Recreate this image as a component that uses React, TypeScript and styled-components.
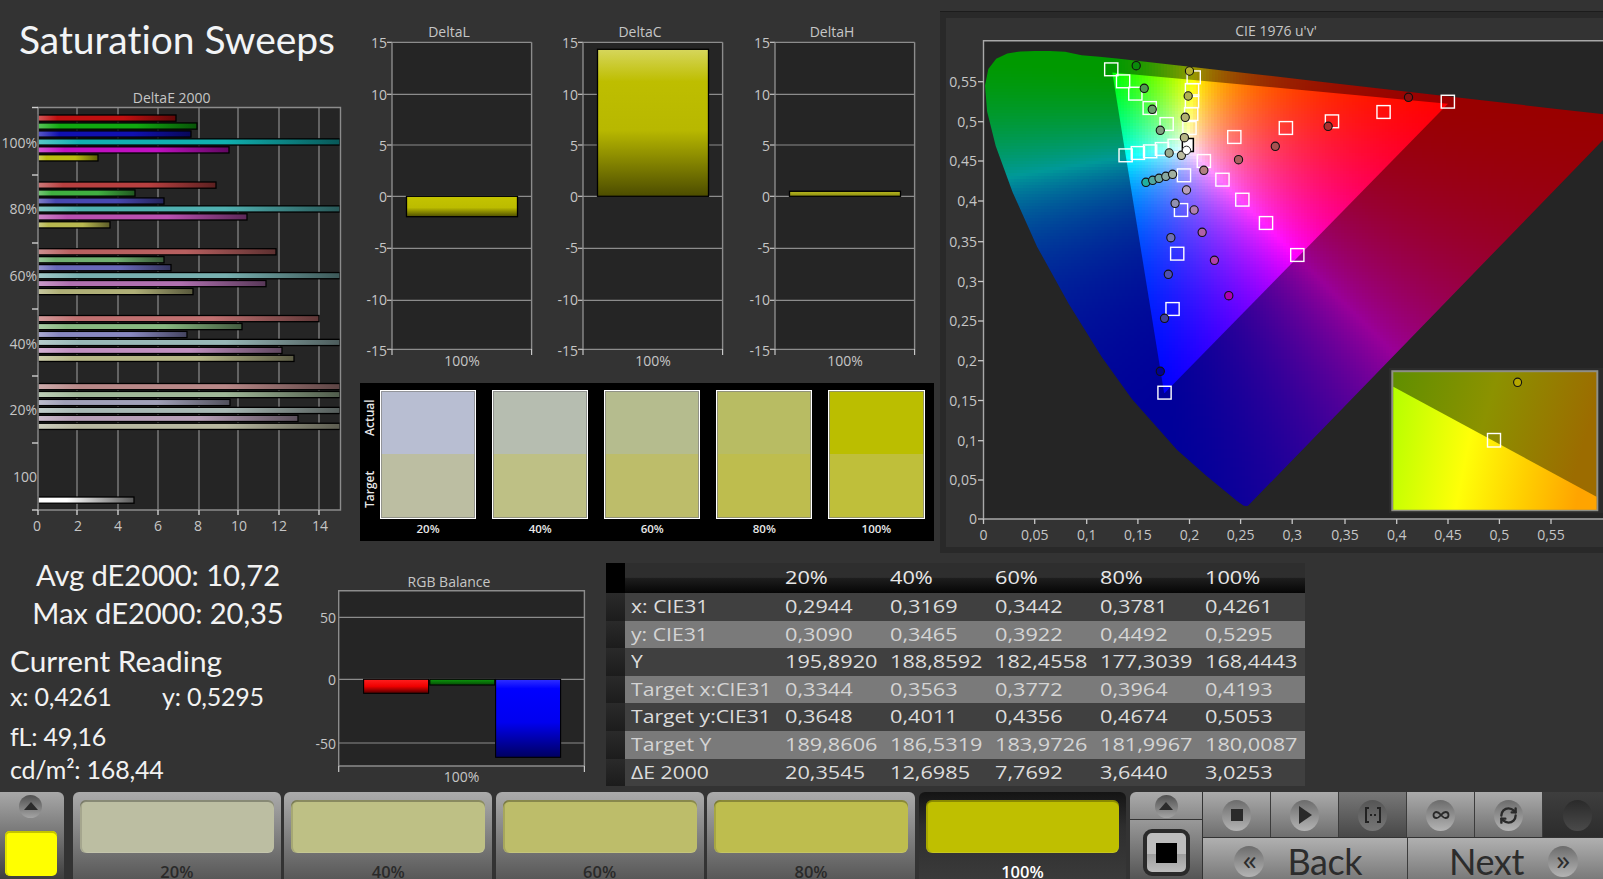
import React, { useMemo } from "react";
import styled, { createGlobalStyle } from "styled-components";
import { Infinity as InfinityIcon, RefreshCw } from "lucide-react";

const Global = createGlobalStyle`
  html, body { margin: 0; padding: 0; background: #333; }
  #root { width: 1603px; height: 879px; }
`;

const Page = styled.div`
  width: 1603px;
  height: 879px;
  background: #333;
  overflow: hidden;
  display: flex;
  flex-direction: column;
  color: #f0f0f0;
  font-family: "Lato", "Open Sans", sans-serif;
`;
const TopArea = styled.div`
  display: flex;
  height: 557px;
`;
const LowerArea = styled.div`
  display: flex;
  height: 235px;
`;
const LeftColumn = styled.section`
  width: 360px;
  display: flex;
  flex-direction: column;
`;
const Title = styled.h1`
  margin: 0;
  height: 85px;
  padding: 17px 0 0 19px;
  box-sizing: border-box;
  font-weight: 400;
  font-size: 39px;
  line-height: 44px;
  letter-spacing: -0.05px;
  color: #f2f4f6;
`;
const MiddleColumn = styled.section`
  width: 580px;
  display: flex;
  flex-direction: column;
`;
const DeltaRow = styled.div`
  display: flex;
  height: 382.5px;
`;
const ChartSvg = styled.svg`
  display: block;
  flex: none;
`;
const ChartTitle = styled.text`
  font-family: "Open Sans", sans-serif;
  font-size: 14px;
  fill: #c6c6c6;
  text-anchor: middle;
`;
const AxisLabel = styled.text`
  font-family: "Open Sans", sans-serif;
  font-size: 14px;
  fill: #c6c6c6;
`;

/* swatch comparison */
const SwatchPanel = styled.div`
  width: 574px;
  height: 158.5px;
  background: #000;
  display: flex;
  box-sizing: border-box;
  padding-top: 7px;
`;
const SideLabels = styled.div`
  width: 20px;
  height: 128px;
  color: #e8e8e8;
  font: 600 12px "Open Sans", sans-serif;
`;
const SideLabel = styled.span<{ $top: number }>`
  display: block;
  height: 36px;
  margin-top: ${(p) => p.$top}px;
  writing-mode: vertical-rl;
  transform: rotate(180deg);
  text-align: center;
  width: 20px;
  line-height: 20px;
`;
const SwatchGrid = styled.div`
  display: grid;
  grid-template-columns: repeat(5, 96.2px);
  column-gap: 15.9px;
`;
const SwatchCard = styled.div`
  display: flex;
  flex-direction: column;
  align-items: center;
  color: #e8e8e8;
  font: 600 11.5px "Open Sans", sans-serif;
`;
const SwatchBox = styled.div`
  width: 96.2px;
  height: 129px;
  box-sizing: border-box;
  border: 1.5px solid #fff;
  outline: 1px solid rgba(130, 130, 130, 0.7);
  outline-offset: -2.5px;
  display: flex;
  flex-direction: column;
  margin-bottom: 2px;
`;
const SwatchHalf = styled.div<{ $c: string }>`
  flex: 1;
  background: ${(p) => p.$c};
`;

/* CIE */
const CieOuter = styled.section`
  width: 663px;
  height: 542px;
  margin-top: 11px;
  box-sizing: border-box;
  background: #292929;
  border-top: 1px solid #1c1c1c;
  padding: 6px 0 6px 6px;
`;

/* stats */
const Stats = styled.section`
  width: 300px;
  flex: none;
  font-size: 29.2px;
  color: #f2f2f2;
`;
const StatCentered = styled.div`
  width: 316px;
  text-align: center;
  line-height: 38px;
  letter-spacing: -0.1px;
  &:first-child { margin-top: -1px; }
`;
const StatHeading = styled.div`
  padding-left: 10px;
  margin-top: 10px;
  line-height: 38px;
  font-size: 29.8px;
`;
const StatLine = styled.div<{ $gap?: number }>`
  padding-left: 10px;
  font-size: 25px;
  line-height: 33px;
  letter-spacing: -0.2px;
  margin-top: ${(p) => p.$gap ?? 0}px;
  display: flex;
`;
const StatX = styled.span`
  width: 152px;
`;

/* table */
const TableWrap = styled.div`
  margin: 5.5px 0 0 0;
`;
const Table = styled.table`
  border-collapse: collapse;
  table-layout: fixed;
  width: 699px;
  font-family: "Open Sans", sans-serif;
`;
const Row = styled.tr<{ $light?: boolean; $h: number }>`
  height: ${(p) => p.$h}px;
  background: ${(p) => (p.$light ? "#7a7a7a" : "#404040")};
  color: ${(p) => (p.$light ? "#d4d4d4" : "#dcdcdc")};
`;
const HeadRow = styled.tr`
  height: 30px;
  background: linear-gradient(#2e2e2e 0 48%, #1e1e1e 50%, #050505 100%);
  color: #e8e8e8;
`;
const Marker = styled.td<{ $head?: boolean }>`
  width: 19px;
  padding: 0;
  background: ${(p) => (p.$head ? "#000" : "linear-gradient(#2a2a2a, #1c1c1c)")};
`;
const LabelCell = styled.td`
  width: 155px;
  padding: 0 0 0 6px;
  box-sizing: border-box;
  white-space: nowrap;
`;
const ValueCell = styled.td`
  width: 105px;
  padding: 0 0 0 5px;
  box-sizing: border-box;
  white-space: nowrap;
`;
const Stretched = styled.span<{ $sx: number }>`
  display: inline-block;
  font-size: 17.5px;
  line-height: 22px;
  transform: scaleX(${(p) => p.$sx});
  transform-origin: left center;
`;

/* bottom bar */
const BottomBar = styled.footer`
  display: flex;
  height: 87px;
  overflow: hidden;
  background: #333;
`;
const PickerTile = styled.div`
  width: 63.5px;
  margin-right: 9.5px;
  flex: none;
  box-sizing: border-box;
  padding-right: 2px;
  border-radius: 0 6px 0 0;
  background: linear-gradient(#a8a8a8, #3f3f3f);
  display: flex;
  flex-direction: column;
  align-items: center;
`;
const UpCircle = styled.div`
  width: 23px;
  height: 23px;
  margin-top: 3px;
  border-radius: 50%;
  background: linear-gradient(#505050, #a4a4a4);
  display: flex;
  align-items: center;
  justify-content: center;
  flex: none;
`;
const UpTriangle = styled.div`
  width: 0;
  height: 0;
  border-left: 7px solid transparent;
  border-right: 7px solid transparent;
  border-bottom: 8px solid #2b2b2b;
  margin-top: -2px;
`;
const PickerSwatch = styled.div`
  width: 52px;
  height: 45px;
  margin-top: 13px;
  border-radius: 5px;
  background: #ffff00;
  box-shadow: inset 0 2px 0 #c4c400, inset 2px 0 0 #e2e200;
`;
const ColorTile = styled.div<{ $selected?: boolean }>`
  width: 207.8px;
  margin-right: 3.6px;
  flex: none;
  box-sizing: border-box;
  border-radius: 6px 6px 0 0;
  background: ${(p) => (p.$selected ? "linear-gradient(#141414 0, #2e2e2e 40%, #3a3a3a)" : "linear-gradient(#ababab, #585858)")};
  padding: 8px ${(p) => (p.$selected ? 7.5 : 7)}px 0;
  color: ${(p) => (p.$selected ? "#fff" : "#2a2a2a")};
  text-align: center;
  font: 600 16.5px/14px "Open Sans", sans-serif;
`;
const TileSwatch = styled.div<{ $c: string }>`
  height: 53px;
  border-radius: 6px;
  background: ${(p) => p.$c};
  box-shadow: inset 0 2px 0 rgba(0, 0, 0, 0.28), inset 2px 0 0 rgba(0, 0, 0, 0.12), inset 0 -1px 0 rgba(255, 255, 255, 0.12);
  margin-bottom: 12px;
`;
const StopColumn = styled.div`
  width: 72.5px;
  margin-right: 1px;
  flex: none;
  display: flex;
  flex-direction: column;
  border-radius: 6px 0 0 0;
  overflow: hidden;
`;
const StopTop = styled.div`
  height: 27px;
  flex: none;
  background: linear-gradient(#ababab, #8a8a8a);
  border-bottom: 1px solid #333;
  display: flex;
  justify-content: center;
`;
const StopBottom = styled.div`
  flex: 1;
  background: linear-gradient(#999, #555);
  display: flex;
  justify-content: center;
  padding-top: 9px;
`;
const StopFrame = styled.div`
  width: 47px;
  height: 47px;
  box-sizing: border-box;
  border: 4px solid #2a2a2a;
  border-radius: 9px;
  background: linear-gradient(#bdbdbd 0 55%, #9d9d9d 55%, #bdbdbd);
  display: flex;
  align-items: center;
  justify-content: center;
`;
const StopSquare = styled.div`
  width: 21px;
  height: 20px;
  background: #000;
`;
const Transport = styled.div`
  flex: 1;
  display: flex;
  flex-direction: column;
`;
const TransportRow = styled.div`
  display: flex;
  height: 44.5px;
  border-bottom: 1px solid #333;
  flex: none;
`;
const TransportButton = styled.div<{ $tone?: "on" | "off" }>`
  width: 68px;
  flex: none;
  box-sizing: border-box;
  padding-top: 2px;
  border-right: 1px solid #3c3c3c;
  display: flex;
  align-items: center;
  justify-content: center;
  background: ${(p) =>
    p.$tone === "on"
      ? "linear-gradient(#787878, #484848)"
      : p.$tone === "off"
      ? "linear-gradient(#3e3e3e, #2c2c2c)"
      : "linear-gradient(#ababab, #6e6e6e)"};
  &:last-child { border-right: 0; flex: 1; }
`;
const RoundKey = styled.div<{ $tone?: "on" | "off" }>`
  width: 29px;
  height: 31px;
  border-radius: 50%;
  display: flex;
  align-items: center;
  justify-content: center;
  background: ${(p) =>
    p.$tone === "on"
      ? "linear-gradient(#555, #777)"
      : p.$tone === "off"
      ? "linear-gradient(#2a2a2a, #4a4a4a)"
      : "linear-gradient(#6c6c6c, #b4b4b4)"};
`;
const NavRow = styled.div`
  display: flex;
  flex: 1;
  min-height: 0;
`;
const NavButton = styled.div<{ $side: "back" | "next" }>`
  width: ${(p) => (p.$side === "back" ? 204.5 : 195)}px;
  flex: none;
  box-sizing: border-box;
  border-right: ${(p) => (p.$side === "back" ? "1px solid #3c3c3c" : "0")};
  background: linear-gradient(#b0b0b0, #7a7a7a);
  display: flex;
  align-items: center;
  padding: 6px 0 0 ${(p) => (p.$side === "back" ? 31 : 41)}px;
  color: #2c2c2c;
  font: 400 36px/35px "Lato", sans-serif;
  letter-spacing: -0.4px;
`;
const NavKey = styled.span`
  width: 30px;
  height: 31px;
  border-radius: 50%;
  flex: none;
  background: linear-gradient(#6c6c6c, #b4b4b4);
  display: flex;
  align-items: center;
  justify-content: center;
  font: 400 28px/28px "Open Sans", sans-serif;
  padding-bottom: 4px;
  box-sizing: border-box;
`;
const NavText = styled.span<{ $gap: number; $after?: boolean }>`
  ${(p) => (p.$after ? `margin-right: ${p.$gap}px;` : `margin-left: ${p.$gap}px;`)}
`;

/* ---------- helpers ---------- */
const hex = (c: string) => [1, 3, 5].map((i) => parseInt(c.slice(i, i + 2), 16));
const mix = (c: string, t: number[], a: number) => {
  const v = hex(c).map((n, i) => Math.round(n + (t[i] - n) * a));
  return `rgb(${v[0]},${v[1]},${v[2]})`;
};

const PlotBg = "#252525";
const Line = "#8c8c8c";

/* ---------- DeltaE horizontal bars ---------- */
const groupData = [
  { y: 115, bars: [["#c01010", 176], ["#10a810", 197], ["#1010b0", 191], ["#10b0b0", 340], ["#c010c0", 229], ["#bcbc10", 98]] },
  { y: 182, bars: [["#b84040", 216], ["#40b040", 135], ["#4848b0", 164], ["#50b0b0", 340], ["#b850b0", 247], ["#b8b850", 110]] },
  { y: 248.7, bars: [["#b86060", 276], ["#70b070", 164], ["#6868b8", 171], ["#78b0b0", 340], ["#b070b0", 266], ["#b0b078", 193]] },
  { y: 315.5, bars: [["#c07070", 319], ["#88b880", 242], ["#8888c0", 187], ["#98b8b8", 340], ["#c090c0", 282], ["#b8b888", 294]] },
  { y: 383.5, bars: [["#b88888", 340], ["#a0b898", 340], ["#a0a0b8", 230], ["#a8b8b4", 340], ["#b8a0b8", 298], ["#b8b8a0", 340]] },
  { y: 497, bars: [["#ffffff", 134]] },
] as { y: number; bars: [string, number][] }[];

const DeltaEChart = () => {
  const x0 = 38;
  const ticks = [77, 118, 158, 199, 238, 279, 319];
  const xLabels = [[0, 37], [2, 78], [4, 118], [6, 158], [8, 198], [10, 239], [12, 279], [14, 320]];
  const cats = [["100%", 148], ["80%", 214], ["60%", 281], ["40%", 349], ["20%", 415], ["100", 482]];
  const catTicks = [107.5, 175, 243, 309, 376, 443, 510];
  return (
    <ChartSvg width={360} height={472} viewBox="0 85 360 472">
      <defs>
        {groupData.flatMap((g) =>
          g.bars.map(([c]) => (
            <linearGradient key={c} id={`h${c.slice(1)}`} x1="0" x2="1" y1="0" y2="0">
              <stop offset="0" stopColor={mix(c, [255, 255, 255], c === "#ffffff" ? 0 : 0.3)} />
              <stop offset="0.14" stopColor={c} />
              <stop offset={c === "#ffffff" ? 0.3 : 0.62} stopColor={c} />
              <stop offset="1" stopColor={mix(c, [0, 0, 0], c === "#ffffff" ? 0.65 : 0.5)} />
            </linearGradient>
          ))
        )}
      </defs>
      <ChartTitle x={171.7} y={103}>DeltaE 2000</ChartTitle>
      <rect x={x0} y={107.5} width={302} height={402.5} fill={PlotBg} />
      {ticks.map((x) => (
        <line key={x} x1={x} x2={x} y1={107.5} y2={510} stroke="#7e7e7e" strokeWidth={1.4} />
      ))}
      {groupData.map((g) =>
        g.bars.map(([c, end], i) => (
          <rect key={g.y + "-" + i} x={x0} y={g.y + i * 7.95} width={end - x0} height={6.2} fill={`url(#h${c.slice(1)})`} stroke="#000" strokeWidth={1.3} />
        ))
      )}
      <path d={`M38 107.5H340.5V510H38Z`} fill="none" stroke={Line} strokeWidth={1.4} />
      {catTicks.map((y) => (
        <line key={y} x1={32} x2={38} y1={y} y2={y} stroke="#cfcfcf" strokeWidth={1.4} />
      ))}
      {ticks.concat([38]).map((x) => (
        <line key={"t" + x} x1={x} x2={x} y1={510} y2={515} stroke="#cfcfcf" strokeWidth={1.4} />
      ))}
      {cats.map(([t, y]) => (
        <AxisLabel key={t} x={37} y={y as number} textAnchor="end">{t}</AxisLabel>
      ))}
      {xLabels.map(([t, x]) => (
        <AxisLabel key={t} x={x} y={531} textAnchor="middle">{t}</AxisLabel>
      ))}
    </ChartSvg>
  );
};

/* ---------- Delta L/C/H ---------- */
const deltaLines = [
  ["15", 42.3, 6], ["10", 94.3, 6], ["5", 145, 6], ["0", 196.3, 6], ["-5", 248.3, 5], ["-10", 300.3, 5], ["-15", 349.3, 7],
] as [string, number, number][];

const DeltaChart = ({ name, top, bottom, grad }: { name: string; top: number; bottom: number; grad: [number, string][] }) => {
  const left = 32;
  const right = 171.6;
  const id = "d" + name;
  return (
    <ChartSvg width={191.4} height={382} viewBox="0 0 191.4 382">
      <defs>
        <linearGradient id={id} x1="0" x2="0" y1="0" y2="1">
          {grad.map(([o, c]) => <stop key={o} offset={o} stopColor={c} />)}
        </linearGradient>
      </defs>
      <ChartTitle x={left + 57} y={37}>{name}</ChartTitle>
      <rect x={left} y={42.3} width={right - left} height={307} fill={PlotBg} />
      {deltaLines.map(([t, y, off]) => (
        <g key={t}>
          <line x1={left} x2={right} y1={y} y2={y} stroke={Line} strokeWidth={1.2} />
          <line x1={left - 5} x2={left} y1={y} y2={y} stroke="#c8c8c8" strokeWidth={1.2} />
          <AxisLabel x={left - 5} y={y + off} textAnchor="end">{t}</AxisLabel>
        </g>
      ))}
      <line x1={left} x2={left} y1={42.3} y2={349.3} stroke={Line} strokeWidth={1.4} />
      <line x1={right} x2={right} y1={42.3} y2={349.3} stroke={Line} strokeWidth={1.4} />
      <line x1={left} x2={left} y1={349} y2={355} stroke="#c8c8c8" strokeWidth={1.2} />
      <line x1={right} x2={right} y1={349} y2={355} stroke="#c8c8c8" strokeWidth={1.2} />
      <rect x={left + 14.5} y={top} width={111} height={bottom - top} fill={`url(#${id})`} stroke="#000" strokeWidth={1.3} />
      <AxisLabel x={left + 70} y={366} textAnchor="middle">100%</AxisLabel>
    </ChartSvg>
  );
};

/* ---------- CIE ---------- */
const locusXY = [
  [0.1741, 0.005], [0.1733, 0.0048], [0.1714, 0.0051], [0.1689, 0.0069], [0.1644, 0.0109], [0.1566, 0.0177],
  [0.144, 0.0297], [0.1241, 0.0578], [0.1096, 0.0868], [0.0913, 0.1327], [0.0687, 0.2007], [0.0454, 0.295],
  [0.0235, 0.4127], [0.0082, 0.5384], [0.0039, 0.6548], [0.0139, 0.7502], [0.0389, 0.812], [0.0743, 0.8338],
  [0.1142, 0.8262], [0.1547, 0.8059], [0.1929, 0.7816], [0.2296, 0.7543], [0.2658, 0.7243], [0.3016, 0.6923],
  [0.3373, 0.6589], [0.3731, 0.6245], [0.4441, 0.5547], [0.5125, 0.4866], [0.5752, 0.4242], [0.627, 0.3725],
  [0.6658, 0.334], [0.6915, 0.3083], [0.7079, 0.292], [0.726, 0.274], [0.7347, 0.2653],
];
const U0 = 983.5;
const V0 = 519;
const SU = 1030;
const SV = 794;
const toPx = (u: number, v: number) => [U0 + u * SU, V0 - v * SV];
const locusPx = locusXY.map(([x, y], i) => {
  const d = -2 * x + 12 * y + 3;
  const [px, py] = toPx((4 * x) / d, (9 * y) / d);
  // the peak of the drawn horseshoe sits a little above the tabulated curve
  const lift = i >= 14 && i <= 21 ? 2.2 : 0;
  return [px, py - lift];
});
const triPx = [toPx(0.451, 0.523), toPx(0.125, 0.5625), toPx(0.1754, 0.1579)];
const pts = (a: number[][]) => a.map((p) => p.map((n) => n.toFixed(1)).join(",")).join(" ");

const inPoly = (px: number, py: number, poly: number[][]) => {
  let inside = false;
  for (let i = 0, j = poly.length - 1; i < poly.length; j = i++) {
    const [xi, yi] = poly[i];
    const [xj, yj] = poly[j];
    if (yi > py !== yj > py && px < ((xj - xi) * (py - yi)) / (yj - yi) + xi) inside = !inside;
  }
  return inside;
};
const colorAt = (px: number, py: number, k: number, e: number) => {
  const u = (px - U0) / SU;
  const v = (V0 - py) / SV;
  const d = 6 * u - 16 * v + 12;
  const x = (9 * u) / d;
  const y = (4 * v) / d;
  const X = x / y;
  const Z = (1 - x - y) / y;
  let r = 3.2406 * X - 1.5372 - 0.4986 * Z;
  let g = -0.9689 * X + 1.8758 + 0.0415 * Z;
  let b = 0.0557 * X - 0.204 + 1.057 * Z;
  r = Math.max(r, 0);
  g = Math.max(g, 0);
  b = Math.max(b, 0);
  const m = Math.max(r, g, b) || 1;
  const f = (n: number) => Math.round(Math.pow(n / m, e) * 255 * k);
  return `rgb(${f(r)},${f(g)},${f(b)})`;
};

const cellsFor = (poly: number[][], k: number, e: number, step: number) => {
  const out: { x: number; y: number; c: string }[] = [];
  const xs = poly.map((p) => p[0]);
  const ys = poly.map((p) => p[1]);
  const x1 = Math.floor(Math.min(...xs));
  const x2 = Math.min(1603, Math.ceil(Math.max(...xs)));
  const y1 = Math.floor(Math.min(...ys));
  const y2 = Math.ceil(Math.max(...ys));
  for (let y = y1; y < y2; y += step) {
    for (let x = x1; x < x2; x += step) {
      const s = step;
      const hit =
        inPoly(x + s / 2, y + s / 2, poly) || inPoly(x, y, poly) || inPoly(x + s, y, poly) || inPoly(x, y + s, poly) || inPoly(x + s, y + s, poly);
      if (hit) out.push({ x, y, c: colorAt(x + s / 2, y + s / 2, k, e) });
    }
  }
  return out;
};

const z5 = (X: number, Y: number) => [940 + X / 2.365, Y / 3];
const z6 = (X: number, Y: number) => [940 + X / 2.365, 280 + Y / 3];

const squares = [
  z5(405, 208), z5(433, 244), z5(462, 281), z5(496, 324), z5(536, 372), z5(555, 437), z5(525, 447), z5(497, 454), z5(468, 459), z5(439, 466),
  z5(600, 232), z5(596, 270), z5(596, 304), z5(594, 342), z5(590, 384),
  z5(1201, 305), z5(1049, 336), z5(927, 364), z5(818, 384), z5(696, 411),
  z5(845, 765), z5(771, 669), z5(715, 599), z5(668, 539), z5(624, 483),
  z6(531, 338), z6(550, 87), z5(561, 761), z5(570, 630), z5(577, 526),
];
const circles: [number[], string][] = [
  [z5(464, 197), "#0a8a0a"], [z5(483, 265), "#4f9a4f"], [z5(502, 328), "#6ca06c"], [z5(521, 391), "#80a080"], [z5(542, 459), "#9aaa90"],
  [z5(590, 213), "#b5b030"], [z5(587, 288), "#b0b050"], [z5(580, 352), "#b0b070"], [z5(578, 413), "#b5b585"], [z5(571, 466), "#bcbca0"],
  [z5(1108, 292), "#8a1010"], [z5(918, 379), "#a83030"], [z5(793, 439), "#a85050"], [z5(706, 479), "#aa6060"], [z5(624, 511), "#b08080"],
  [z5(683, 887), "#b000b0"], [z5(649, 781), "#b040a8"], [z5(620, 697), "#b060a8"], [z5(601, 630), "#b080b0"], [z5(583, 570), "#b8a0b8"],
  [z6(521, 274), "#000090"], [z6(531, 115), "#404098"], [z5(540, 823), "#5050b0"], [z5(546, 713), "#7070b0"], [z5(556, 610), "#9090b0"],
  [z5(487, 547), "#20b0a0"], [z5(503, 541), "#50a8a0"], [z5(518, 535), "#70a8a0"], [z5(534, 529), "#88a8a0"], [z5(550, 523), "#a0b0a0"],
];

const CieChart = () => {
  const outer = useMemo(() => cellsFor(locusPx, 0.6, 1.3, 3), []);
  const inner = useMemo(() => cellsFor(triPx, 1, 1.05, 3), []);
  const uTicks = ["0", "0,05", "0,1", "0,15", "0,2", "0,25", "0,3", "0,35", "0,4", "0,45", "0,5", "0,55"];
  const uX = [983.5, 1034.7, 1086.7, 1137.9, 1189.5, 1240.6, 1292.2, 1345, 1396.7, 1448, 1499.4, 1551];
  const vY = [519, 480, 440.7, 400.5, 360.7, 321, 281.5, 241.7, 201, 161, 121.7, 81.7];
  const [wx, wy] = z5(585, 435);
  const [cx, cy] = z5(583, 451);
  return (
    <ChartSvg width={657} height={529} viewBox="946 18 657 529">
      <defs>
        <clipPath id="locus"><polygon points={pts(locusPx)} /></clipPath>
        <clipPath id="tri"><polygon points={pts(triPx)} /></clipPath>
        <linearGradient id="insetBright" x1="0" x2="1" y1="0" y2="0.12">
          <stop offset="0" stopColor="#b4ff00" />
          <stop offset="0.42" stopColor="#ffff08" />
          <stop offset="0.72" stopColor="#ffd000" />
          <stop offset="1" stopColor="#ffa400" />
        </linearGradient>
        <linearGradient id="insetDark" x1="0" x2="1" y1="0" y2="0.2">
          <stop offset="0" stopColor="#5f8f00" />
          <stop offset="0.5" stopColor="#8c9200" />
          <stop offset="1" stopColor="#9c6c00" />
        </linearGradient>
      </defs>
      <rect x={946} y={18} width={657} height={529} fill="#333" />
      <ChartTitle x={1276} y={36}>CIE 1976 u'v'</ChartTitle>
      <rect x={983.5} y={40.7} width={640} height={478.3} fill={PlotBg} />
      <path d="M1603 40.7H983.5V519H1603" fill="none" stroke="#a8a8a8" strokeWidth={1.4} />
      <g clipPath="url(#locus)" shapeRendering="crispEdges">
        {outer.map((c) => <rect key={c.x + "_" + c.y} x={c.x} y={c.y} width={3.4} height={3.4} fill={c.c} />)}
      </g>
      <g clipPath="url(#tri)" shapeRendering="crispEdges">
        {inner.map((c) => <rect key={c.x + "_" + c.y} x={c.x} y={c.y} width={3.4} height={3.4} fill={c.c} />)}
      </g>
      {uTicks.map((t, i) => (
        <g key={t}>
          <line x1={978} x2={983.5} y1={vY[i]} y2={vY[i]} stroke="#c8c8c8" strokeWidth={1.3} />
          <AxisLabel x={977} y={vY[i] + 5} textAnchor="end">{t}</AxisLabel>
          <line x1={uX[i]} x2={uX[i]} y1={519} y2={524} stroke="#c8c8c8" strokeWidth={1.3} />
          <AxisLabel x={uX[i]} y={540} textAnchor="middle">{t}</AxisLabel>
        </g>
      ))}
      {squares.map(([x, y], i) => (
        <rect key={i} x={x - 6.6} y={y - 6.4} width={13.2} height={12.8} fill="none" stroke="#fff" strokeWidth={1.4} />
      ))}
      <rect x={wx - 5} y={wy - 6.5} width={11} height={13} fill="#fff" stroke="#000" strokeWidth={1.5} />
      {circles.map(([p, c], i) => (
        <ellipse key={i} cx={p[0]} cy={p[1]} rx={4.1} ry={4.2} fill={c} stroke="#111" strokeWidth={1.1} />
      ))}
      <ellipse cx={cx} cy={cy} rx={4.1} ry={4.2} fill="#fff" stroke="#222" strokeWidth={1} />
      <rect x={1389} y={368} width={214} height={145} fill="#2b2b2b" />
      <rect x={1392.3} y={371.2} width={205} height={139} fill="url(#insetDark)" stroke="#8f8f86" strokeWidth={2} />
      <polygon points="1393.3,386.7 1596.5,496.7 1596.5,509.7 1393.3,509.7" fill="url(#insetBright)" />
      <rect x={1487.5} y={433.5} width={13} height={13.5} fill="none" stroke="#fff" strokeWidth={1.4} />
      <ellipse cx={1517.6} cy={382.3} rx={4} ry={4.2} fill="#b7a800" stroke="#111" strokeWidth={1.1} />
    </ChartSvg>
  );
};

/* ---------- RGB Balance ---------- */
const RgbChart = () => (
  <ChartSvg width={306} height={235} viewBox="300 557 306 235">
    <defs>
      <linearGradient id="rgbR" x1="0" x2="0" y1="0" y2="1">
        <stop offset="0" stopColor="#ff2020" />
        <stop offset="0.5" stopColor="#f00000" />
        <stop offset="1" stopColor="#500000" />
      </linearGradient>
      <linearGradient id="rgbG" x1="0" x2="0" y1="0" y2="1">
        <stop offset="0" stopColor="#0c9a0c" />
        <stop offset="1" stopColor="#064a06" />
      </linearGradient>
      <linearGradient id="rgbB" x1="0" x2="0" y1="0" y2="1">
        <stop offset="0" stopColor="#3030ff" />
        <stop offset="0.12" stopColor="#0000ff" />
        <stop offset="0.55" stopColor="#0000f0" />
        <stop offset="1" stopColor="#000060" />
      </linearGradient>
    </defs>
    <ChartTitle x={449} y={586.5}>RGB Balance</ChartTitle>
    <rect x={338.7} y={590.7} width={245.7} height={175.3} fill={PlotBg} />
    <path d="M338.7 766V590.7H584.4V766" fill="none" stroke={Line} strokeWidth={1.4} />
    <line x1={338.7} x2={584.4} y1={766} y2={766} stroke={Line} strokeWidth={1.4} />
    {([["50", 617.3], ["0", 679.3], ["-50", 743]] as [string, number][]).map(([t, y]) => (
      <g key={t}>
        <line x1={338.7} x2={584.4} y1={y} y2={y} stroke={Line} strokeWidth={1.2} />
        <AxisLabel x={336} y={y + 6} textAnchor="end">{t}</AxisLabel>
      </g>
    ))}
    <line x1={338.7} x2={338.7} y1={766} y2={772} stroke="#c8c8c8" strokeWidth={1.2} />
    <line x1={584.4} x2={584.4} y1={766} y2={772} stroke="#c8c8c8" strokeWidth={1.2} />
    <rect x={363.6} y={679.3} width={65} height={14} fill="url(#rgbR)" stroke="#000" strokeWidth={1.1} />
    <rect x={429.8} y={679.3} width={65} height={5.7} fill="url(#rgbG)" stroke="#000" strokeWidth={1.1} />
    <rect x={495.6} y={679.3} width={65} height={78} fill="url(#rgbB)" stroke="#000" strokeWidth={1.1} />
    <AxisLabel x={461.5} y={782} textAnchor="middle">100%</AxisLabel>
  </ChartSvg>
);

/* ---------- data ---------- */
const pct = ["20%", "40%", "60%", "80%", "100%"];
const actual = ["#b8bed2", "#b6bdb0", "#b5bc8e", "#b8bc63", "#bbbe00"];
const target = ["#bcbea2", "#bec085", "#bdbd6a", "#bebd4e", "#bfbf3a"];
const tileColors = ["#bcbea2", "#bec085", "#bdbd6a", "#bebd4e", "#bfbf00"];
const tableRows: [string, string[], number, boolean][] = [
  ["x: CIE31", ["0,2944", "0,3169", "0,3442", "0,3781", "0,4261"], 28, false],
  ["y: CIE31", ["0,3090", "0,3465", "0,3922", "0,4492", "0,5295"], 27, true],
  ["Y", ["195,8920", "188,8592", "182,4558", "177,3039", "168,4443"], 28, false],
  ["Target x:CIE31", ["0,3344", "0,3563", "0,3772", "0,3964", "0,4193"], 27, true],
  ["Target y:CIE31", ["0,3648", "0,4011", "0,4356", "0,4674", "0,5053"], 28, false],
  ["Target Y", ["189,8606", "186,5319", "183,9726", "181,9967", "180,0087"], 28, true],
  ["ΔE 2000", ["20,3545", "12,6985", "7,7692", "3,6440", "3,0253"], 27, false],
];

const BracketIcon = () => (
  <svg width="20" height="20" viewBox="0 0 20 20" fill="none" stroke="#222" strokeWidth="2">
    <path d="M6 3H3v14h3M14 3h3v14h-3" />
    <rect x="7" y="9" width="2" height="2" fill="#222" stroke="none" />
    <rect x="11" y="9" width="2" height="2" fill="#222" stroke="none" />
  </svg>
);

export default function App() {
  return (
    <Page>
      <Global />
      <TopArea>
        <LeftColumn>
          <Title>Saturation Sweeps</Title>
          <DeltaEChart />
        </LeftColumn>
        <MiddleColumn>
          <DeltaRow>
            <DeltaChart name="DeltaL" top={196.3} bottom={216.7} grad={[[0, "#c4c400"], [0.55, "#bcbc00"], [1, "#4e4e00"]]} />
            <DeltaChart name="DeltaC" top={49.3} bottom={196.3} grad={[[0, "#d6d65c"], [0.22, "#bebe00"], [0.55, "#b8b800"], [1, "#4c4c00"]]} />
            <DeltaChart name="DeltaH" top={191.3} bottom={196.3} grad={[[0, "#b8b820"], [1, "#8c8c10"]]} />
          </DeltaRow>
          <SwatchPanel>
            <SideLabels>
              <SideLabel $top={10}>Actual</SideLabel>
              <SideLabel $top={36}>Target</SideLabel>
            </SideLabels>
            <SwatchGrid>
              {pct.map((p, i) => (
                <SwatchCard key={p}>
                  <SwatchBox>
                    <SwatchHalf $c={actual[i]} />
                    <SwatchHalf $c={target[i]} />
                  </SwatchBox>
                  {p}
                </SwatchCard>
              ))}
            </SwatchGrid>
          </SwatchPanel>
        </MiddleColumn>
        <CieOuter>
          <CieChart />
        </CieOuter>
      </TopArea>
      <LowerArea>
        <Stats>
          <StatCentered>Avg dE2000: 10,72</StatCentered>
          <StatCentered>Max dE2000: 20,35</StatCentered>
          <StatHeading>Current Reading</StatHeading>
          <StatLine>
            <StatX>x: 0,4261</StatX>
            <span>y: 0,5295</span>
          </StatLine>
          <StatLine $gap={7}>fL: 49,16</StatLine>
          <StatLine>cd/m²: 168,44</StatLine>
        </Stats>
        <RgbChart />
        <TableWrap>
          <Table>
            <tbody>
              <HeadRow>
                <Marker $head />
                <LabelCell />
                {pct.map((p) => (
                  <ValueCell key={p}><Stretched $sx={1.24}>{p}</Stretched></ValueCell>
                ))}
              </HeadRow>
              {tableRows.map(([label, vals, h, light]) => (
                <Row key={label} $h={h} $light={light}>
                  <Marker />
                  <LabelCell><Stretched $sx={1.21}>{label}</Stretched></LabelCell>
                  {vals.map((v, i) => (
                    <ValueCell key={i}><Stretched $sx={1.24}>{v}</Stretched></ValueCell>
                  ))}
                </Row>
              ))}
            </tbody>
          </Table>
        </TableWrap>
      </LowerArea>
      <BottomBar>
        <PickerTile>
          <UpCircle><UpTriangle /></UpCircle>
          <PickerSwatch />
        </PickerTile>
        {pct.map((p, i) => (
          <ColorTile key={p} $selected={i === 4}>
            <TileSwatch $c={tileColors[i]} />
            {p}
          </ColorTile>
        ))}
        <StopColumn>
          <StopTop>
            <UpCircle><UpTriangle /></UpCircle>
          </StopTop>
          <StopBottom>
            <StopFrame><StopSquare /></StopFrame>
          </StopBottom>
        </StopColumn>
        <Transport>
          <TransportRow>
            <TransportButton>
              <RoundKey>
                <svg width="12" height="12" viewBox="0 0 12 12"><rect width="12" height="12" fill="#2a2a2a" /></svg>
              </RoundKey>
            </TransportButton>
            <TransportButton>
              <RoundKey>
                <svg width="14" height="18" viewBox="0 0 14 18"><polygon points="1,0 14,9 1,18" fill="#2a2a2a" /></svg>
              </RoundKey>
            </TransportButton>
            <TransportButton $tone="on">
              <RoundKey $tone="on"><BracketIcon /></RoundKey>
            </TransportButton>
            <TransportButton>
              <RoundKey><InfinityIcon size={18} color="#2a2a2a" strokeWidth={2.4} /></RoundKey>
            </TransportButton>
            <TransportButton>
              <RoundKey><RefreshCw size={19} color="#2a2a2a" strokeWidth={3} /></RoundKey>
            </TransportButton>
            <TransportButton $tone="off">
              <RoundKey $tone="off" />
            </TransportButton>
          </TransportRow>
          <NavRow>
            <NavButton $side="back">
              <NavKey>«</NavKey>
              <NavText $gap={23}>Back</NavText>
            </NavButton>
            <NavButton $side="next">
              <NavText $gap={24} $after>Next</NavText>
              <NavKey>»</NavKey>
            </NavButton>
          </NavRow>
        </Transport>
      </BottomBar>
    </Page>
  );
}
